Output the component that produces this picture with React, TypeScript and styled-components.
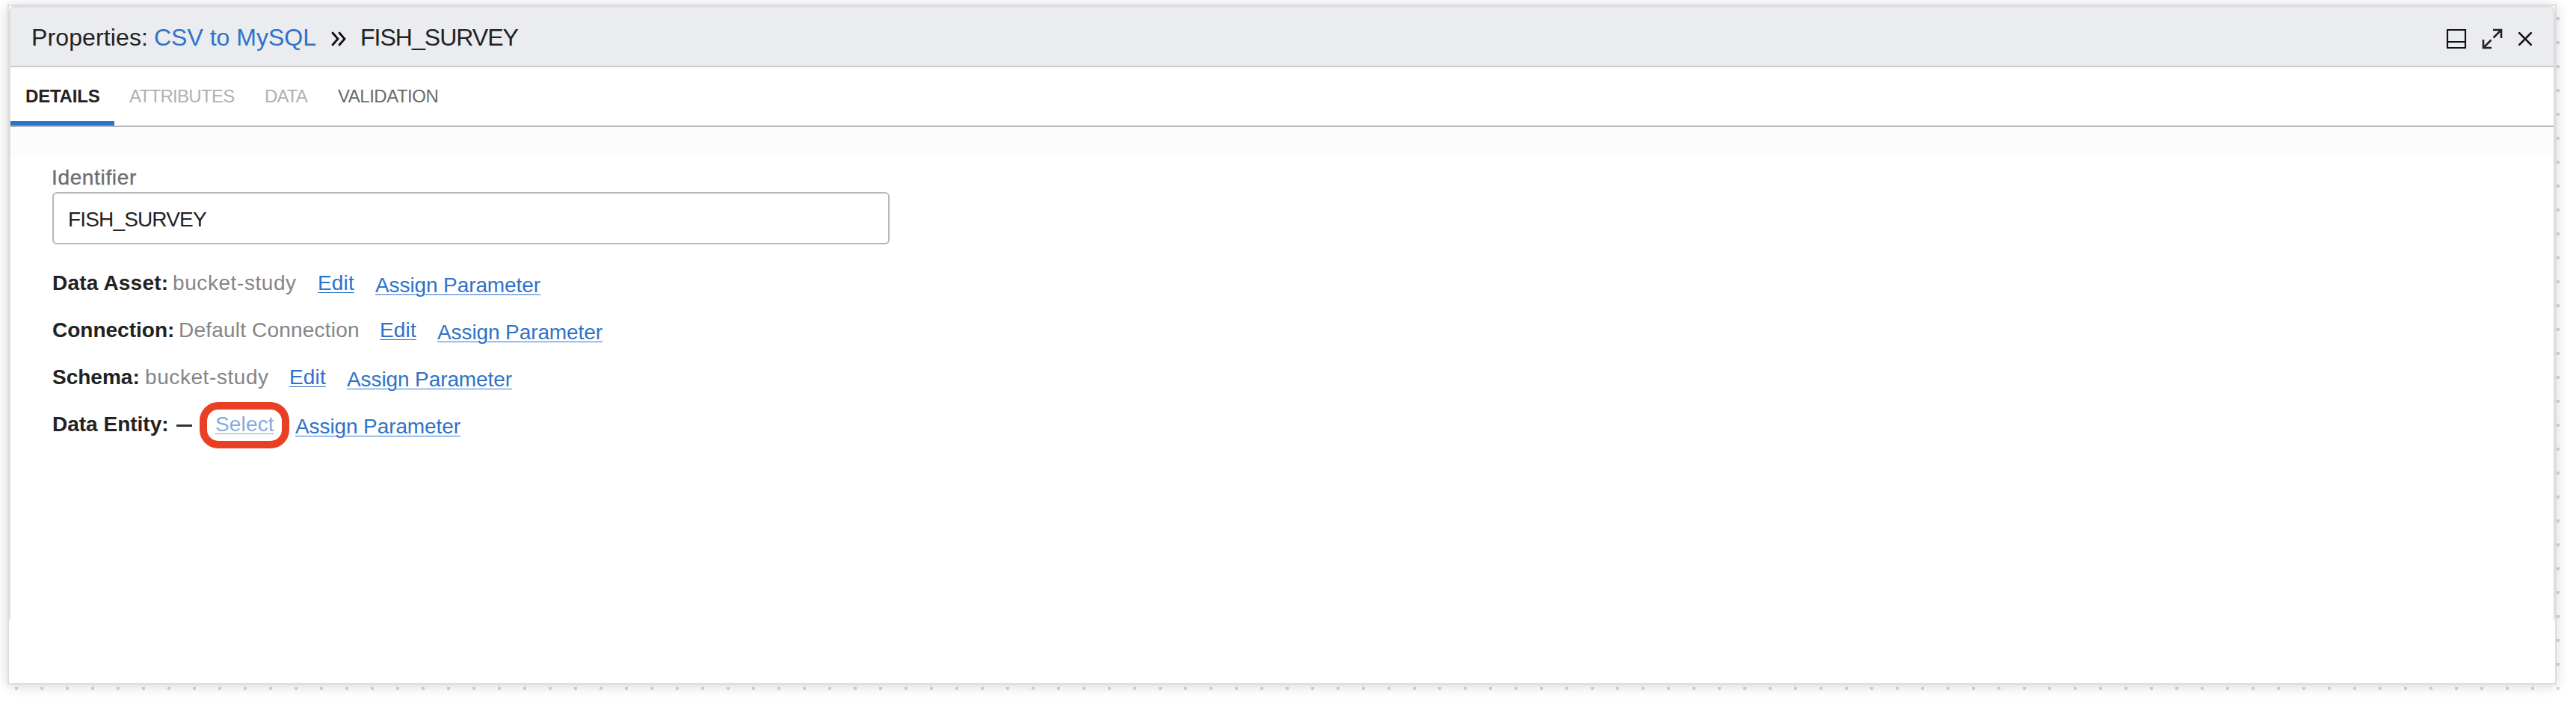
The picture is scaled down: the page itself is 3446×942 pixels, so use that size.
import React from "react";
import styled, { createGlobalStyle } from "styled-components";

const Global = createGlobalStyle`
  * { box-sizing: border-box; }
  body {
    margin: 0;
    background: #fff;
    font-family: "Liberation Sans", Arial, sans-serif;
    color: #222;
  }
`;

const Canvas = styled.div`
  width: 3446px;
  height: 942px;
  padding: 6px 26px 26px 10px;
  overflow: hidden;
  background-color: #fff;
  background-image: conic-gradient(from 270deg at 4px 4px, #d8d8d8 90deg, transparent 0);
  background-size: 34px 32px;
  background-position: 20px 23px;
`;

const Frame = styled.main`
  height: 910px;
  border: 2px solid #ddd;
  background: #fff;
  box-shadow: 0 2px 16px rgba(0, 0, 0, 0.16);
`;

const Panel = styled.section`
  height: 822px;
  border: 2px solid #ddd;
  border-bottom: 0;
  border-radius: 8px 8px 4px 4px;
  overflow: hidden;
`;

const Header = styled.header`
  display: flex;
  align-items: center;
  justify-content: space-between;
  height: 80px;
  padding: 2px 28px 0 28px;
  background: #ebecf0;
  border-bottom: 2px solid #c8cbd0;
`;

const Crumbs = styled.div`
  display: flex;
  align-items: center;
  font-size: 32px;
  line-height: 36px;
  white-space: nowrap;
`;

const Crumb = styled.span<{ $w: number; $ls?: number; $link?: boolean }>`
  width: ${(p) => p.$w}px;
  letter-spacing: ${(p) => p.$ls ?? 0}px;
  color: ${(p) => (p.$link ? "#2f72c9" : "#222")};
`;

const Separator = styled.svg`
  width: 20px;
  height: 20px;
  margin: 4px 19px 0 0;
`;

const Actions = styled.div`
  display: flex;
  align-items: center;
  gap: 20px;
  margin-top: 4px;
  svg { display: block; }
`;

const Tabs = styled.nav`
  display: flex;
  height: 80px;
  border-bottom: 2px solid #b4b8be;
`;

const Tab = styled.div<{ $w: number; $ls: number; $tone: string; $active?: boolean }>`
  width: ${(p) => p.$w}px;
  height: 78px;
  padding: 25px 0 0 20px;
  font-size: 24px;
  line-height: 28px;
  white-space: nowrap;
  letter-spacing: ${(p) => p.$ls}px;
  font-weight: ${(p) => (p.$active ? 700 : 400)};
  color: ${(p) => p.$tone};
  border-bottom: ${(p) => (p.$active ? "6px solid #2f72c9" : "0")};
`;

const Strip = styled.div`
  height: 40px;
  background: #fcfcfc;
`;

const Form = styled.div`
  padding: 13px 56px 0;
`;

const Label = styled.label`
  display: block;
  height: 34px;
  margin-left: -1px;
  font-size: 28px;
  line-height: 30px;
  color: #6e6e6e;
  letter-spacing: 0.65px;
  -webkit-text-stroke: 0.4px #6e6e6e;
`;

const Field = styled.div`
  display: flex;
  align-items: center;
  width: 1120px;
  height: 70px;
  padding: 4px 0 0 19px;
  border: 2px solid #b4b8be;
  border-radius: 6px;
  font-size: 28px;
  letter-spacing: -0.84px;
`;

const Rows = styled.div`
  padding-top: 36px;
`;

const Row = styled.div`
  display: flex;
  align-items: flex-start;
  height: 63px;
  font-size: 28px;
  line-height: 32px;
  white-space: nowrap;
`;

const Name = styled.b<{ $w: number; $ls?: number }>`
  width: ${(p) => p.$w}px;
  letter-spacing: ${(p) => p.$ls ?? 0}px;
`;

const Value = styled.span<{ $w: number; $ls: number }>`
  width: ${(p) => p.$w}px;
  letter-spacing: ${(p) => p.$ls}px;
  color: #858585;
`;

const Dash = styled.span`
  width: 21px;
  height: 3px;
  margin: 16px 10px 0 4px;
  background: #333;
`;

const Link = styled.a<{ $low?: boolean; $muted?: boolean }>`
  color: ${(p) => (p.$muted ? "#86abdf" : "#2f72c9")};
  padding-top: ${(p) => (p.$low ? 3 : 0)}px;
  letter-spacing: ${(p) => (p.$low ? -0.1 : 0.15)}px;
  text-decoration: underline;
  text-decoration-thickness: 1px;
  text-underline-offset: 3px;
`;

const Slot = styled.span<{ $w: number }>`
  width: ${(p) => p.$w}px;
`;

const Highlight = styled.span`
  width: 120px;
  height: 62px;
  margin: -14px 8px 0 0;
  padding: 4px 0 0 11px;
  border: 10px solid #e94025;
  border-radius: 25px;
`;

const ENTRIES = [
  { name: "Data Asset:", nameW: 161, nameLs: 0.2, value: "bucket-study", valueW: 194, valueLs: 0.58 },
  { name: "Connection:", nameW: 169, nameLs: 0, value: "Default Connection", valueW: 269, valueLs: 0.2 },
  { name: "Schema:", nameW: 124, nameLs: 0, value: "bucket-study", valueW: 193, valueLs: 0.58 },
];

export default function App() {
  return (
    <Canvas>
      <Global />
      <Frame>
        <Panel>
          <Header>
            <Crumbs>
              <Crumb $w={164} $ls={0.12}>Properties:</Crumb>
              <Crumb $w={237} $link>CSV to MySQL</Crumb>
              <Separator viewBox="0 0 20 20" fill="none" stroke="#111" strokeWidth="2.8" strokeLinecap="round">
                <path d="M2 2 9 10 2 18M11 2 18 10 11 18" />
              </Separator>
              <Crumb $w={220} $ls={-0.98}>FISH_SURVEY</Crumb>
            </Crumbs>
            <Actions>
              <svg width="28" height="28" viewBox="0 0 28 28" fill="none" stroke="#111" strokeWidth="2.2">
                <path d="M2 2H26V26H2ZM2 18H26" />
              </svg>
              <svg width="28" height="28" viewBox="0 0 28 28" fill="none" stroke="#222" strokeWidth="2.6">
                <path d="M15 2H26V13M26 2 15.5 12.5M13 26H2V15M2 26 12.5 15.5" />
              </svg>
              <svg width="20" height="20" viewBox="0 0 20 20" fill="none" stroke="#111" strokeWidth="2.6" strokeLinecap="round">
                <path d="M2.2 2.2 17.8 17.8M17.8 2.2 2.2 17.8" />
              </svg>
            </Actions>
          </Header>
          <Tabs>
            <Tab $w={139} $ls={-0.2} $tone="#222" $active>DETAILS</Tab>
            <Tab $w={181} $ls={-0.7} $tone="#b0b0b0">ATTRIBUTES</Tab>
            <Tab $w={98} $ls={-0.9} $tone="#b0b0b0">DATA</Tab>
            <Tab $w={180} $ls={-0.48} $tone="#6b6b6b">VALIDATION</Tab>
          </Tabs>
          <Strip />
          <Form>
            <Label>Identifier</Label>
            <Field>FISH_SURVEY</Field>
            <Rows>
              {ENTRIES.map((e) => (
                <Row key={e.name}>
                  <Name $w={e.nameW} $ls={e.nameLs}>{e.name}</Name>
                  <Value $w={e.valueW} $ls={e.valueLs}>{e.value}</Value>
                  <Slot $w={77}><Link>Edit</Link></Slot>
                  <Link $low>Assign Parameter</Link>
                </Row>
              ))}
              <Row>
                <Name $w={162}>Data Entity:</Name>
                <Dash />
                <Highlight><Link $muted>Select</Link></Highlight>
                <Link $low>Assign Parameter</Link>
              </Row>
            </Rows>
          </Form>
        </Panel>
      </Frame>
    </Canvas>
  );
}
